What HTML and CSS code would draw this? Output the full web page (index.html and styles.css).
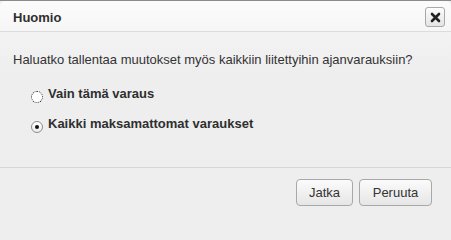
FILE: index.html
```html
<!DOCTYPE html>
<html lang="fi">
<head>
<meta charset="utf-8">
<title>Huomio</title>
<link rel="stylesheet" href="styles.css">
</head>
<body>
<div class="dialog">
  <div class="header">
    <span class="title">Huomio</span>
    <button class="close" type="button" aria-label="Sulje">
      <svg width="11" height="11" viewBox="0 0 11 11"><path d="M2 2 L9 9 M9 2 L2 9" stroke="#222" stroke-width="2.6" stroke-linecap="round"/></svg>
    </button>
  </div>
  <div class="content">
    <p class="message">Haluatko tallentaa muutokset myös kaikkiin liitettyihin ajanvarauksiin?</p>
    <div class="options">
      <label class="option"><span class="radio focus"></span><span class="opt-text">Vain tämä varaus</span></label>
      <label class="option"><span class="radio checked"></span><span class="opt-text">Kaikki maksamattomat varaukset</span></label>
    </div>
  </div>
  <div class="footer">
    <button class="btn btn-jatka" type="button">Jatka</button>
    <button class="btn btn-peruuta" type="button">Peruuta</button>
  </div>
</div>
</body>
</html>
```
FILE: styles.css
```css
html, body {
  margin: 0;
  padding: 0;
  background: #eeeeee;
}
.dialog {
  width: 451px;
  height: 220px;
  box-sizing: border-box;
  border-top: 1px solid #8a8a8a;
  background: #eeeeee;
  display: flex;
  flex-direction: column;
  font-family: "Liberation Sans", Arial, sans-serif;
  color: #333;
}
.header {
  height: 30px;
  flex: none;
  display: flex;
  align-items: center;
  justify-content: space-between;
  padding: 0 3px 0 13px;
  background: linear-gradient(#fbfbfb, #f6f6f6);
  border-bottom: 1px solid #dcdcdc;
  border-top-left-radius: 5px;
  border-top-right-radius: 5px;
}
.title {
  font-weight: bold;
  font-size: 13px;
  color: #2f2f2f;
  position: relative;
  top: 1px;
}
.close {
  width: 20px;
  height: 20px;
  padding: 0;
  border: 1px solid #a9a9a9;
  border-radius: 3px;
  background: linear-gradient(#fdfdfd, #e4e4e4);
  display: flex;
  align-items: center;
  justify-content: center;
  position: relative;
  top: 1px;
  right: 3px;
}
.close svg { display: block; }
.content {
  flex: 1;
  padding: 20px 0 0 13px;
  background: linear-gradient(#f3f3f3, #eeeeee 40px);
}
.message {
  margin: 0;
  font-size: 13px;
  line-height: 16px;
  color: #333;
}
.options {
  margin: 16px 0 0 18px;
  display: flex;
  flex-direction: column;
  gap: 10px;
}
.option {
  height: 20px;
  display: flex;
  align-items: flex-end;
}
.radio {
  width: 12px;
  height: 12px;
  box-sizing: border-box;
  border-radius: 50%;
  border: 1px solid #8d8d8d;
  background: linear-gradient(#ffffff, #ececec);
  margin-right: 5px;
  position: relative;
  top: -1px;
  flex: none;
}
.radio.focus {
  border: 1px dotted #222;
  background: #fff;
}
.radio.checked::after {
  content: "";
  position: absolute;
  left: 3px;
  top: 3px;
  width: 4px;
  height: 4px;
  border-radius: 50%;
  background: #111;
}
.opt-text {
  font-weight: bold;
  font-size: 13px;
  line-height: 16px;
  color: #2f2f2f;
  position: relative;
  top: -2px;
}
.footer {
  height: 41px;
  flex: none;
  border-top: 1px solid #d6d6d6;
  display: flex;
  justify-content: flex-end;
  align-items: flex-start;
  gap: 6px;
  padding: 11px 19px 0 0;
}
.btn {
  height: 27px;
  border: 1px solid #a8a8a8;
  border-radius: 4px;
  background: linear-gradient(#fbfbfb, #e6e6e6);
  font-family: "Liberation Sans", Arial, sans-serif;
  font-size: 13px;
  color: #333;
  padding: 0;
}
.btn-jatka { width: 57px; }
.btn-peruuta { width: 73px; }
```
